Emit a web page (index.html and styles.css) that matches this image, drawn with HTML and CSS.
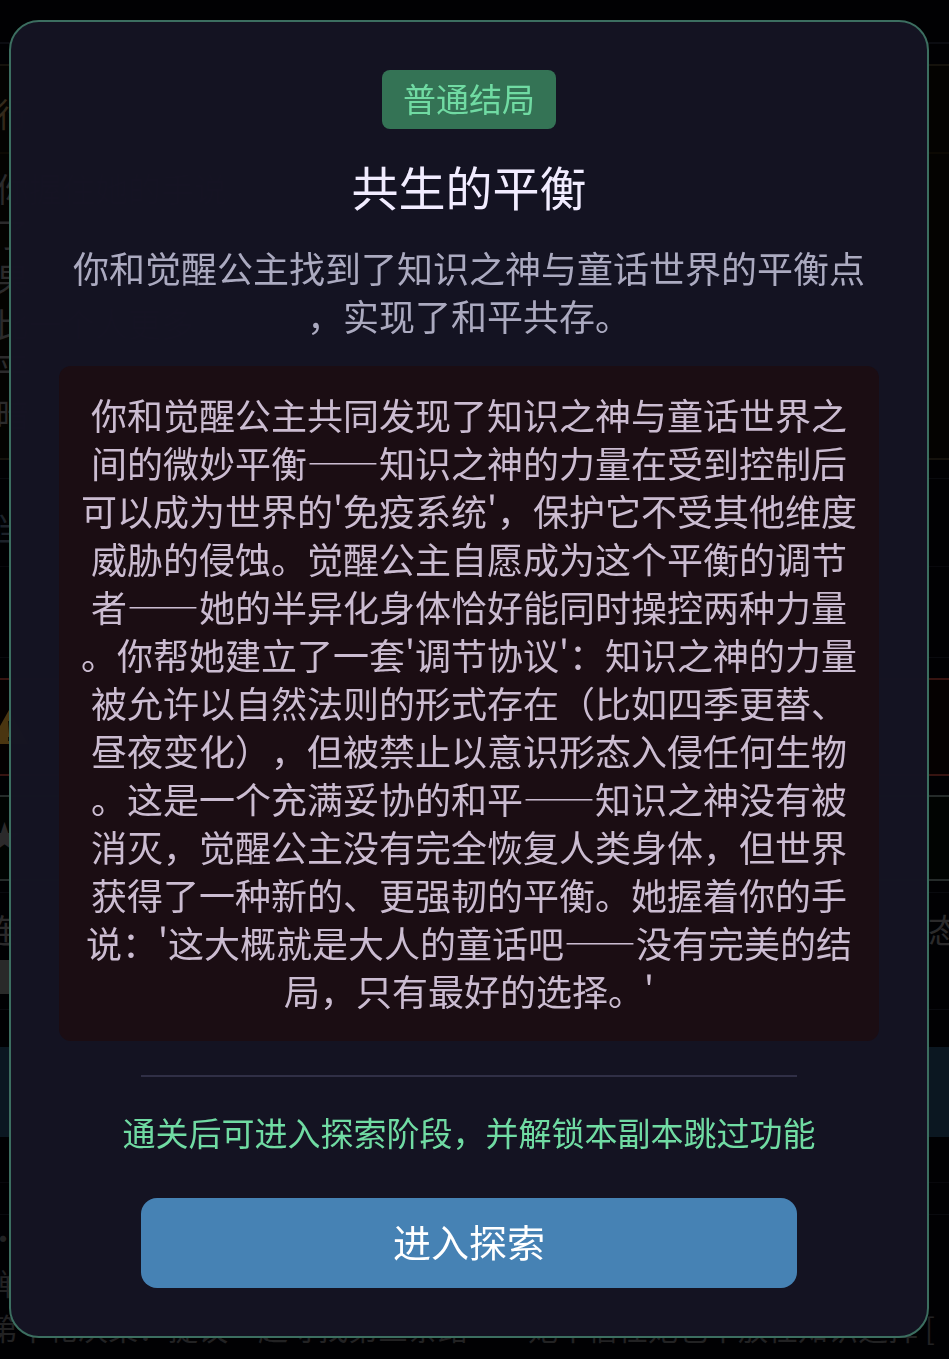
FILE: index.html
```
<!DOCTYPE html>
<html lang="zh-CN">
<head>
    <meta charset="UTF-8">
    <meta name="viewport" content="width=device-width, initial-scale=1.0">
    <title>共生的平衡</title>
    <link rel="stylesheet" href="styles.css">
</head>
<body>
    <!-- 游戏页面 -->
    <div class="scene" aria-hidden="true">
        <div class="scene-top"></div>
        <div class="story-panel">
            <div class="story-title">行</div>
            <div class="story-text">
                <p>你握住她的手说</p>
                <p>了</p>
                <p>果</p>
                <p>比一个人更多</p>
                <p>平</p>
                <p>暗</p>
            </div>
        </div>
        <div class="status-panel">
            <div class="status-title">当</div>
            <div class="status-body"></div>
        </div>
        <div class="box danger">
            <svg class="warn" viewBox="0 0 40 40">
                <path d="M17 1 L36 35 H-2 Z" fill="#4a3510"/>
                <path d="M16 12 H20 L19 25 H17 Z M16 28 H20 V32 H16 Z" fill="#120d04"/>
            </svg>
        </div>
        <div class="box reward">★</div>
        <div class="combo-panel">
            <div class="combo-row"><span>连</span><span>态</span></div>
            <div class="combo-bar"></div>
        </div>
        <div class="action-bar"></div>
        <div class="scene-gap"></div>
        <div class="log">
            <p>·</p>
            <p>弹</p>
            <p>第十轮决策：提议一起寻找第三条路——她不信任她也不放任知识选择 [</p>
            <p>普通]</p>
        </div>
    </div>

    <!-- 结局弹窗 -->
    <div class="overlay">
        <div class="modal" role="dialog" aria-modal="true" aria-labelledby="ending-title">
            <span class="badge">普通结局</span>
            <h1 class="title" id="ending-title">共生的平衡</h1>
            <p class="summary">你和觉醒公主找到了知识之神与童话世界的平衡点，实现了和平共存。</p>
            <div class="ending">你和觉醒公主共同发现了知识之神与童话世界之间的微妙平衡——知识之神的力量在受到控制后可以成为世界的'免疫系统'，保护它不受其他维度威胁的侵蚀。觉醒公主自愿成为这个平衡的调节者——她的半异化身体恰好能同时操控两种力量。你帮她建立了一套'调节协议'：知识之神的力量被允许以自然法则的形式存在（比如四季更替、昼夜变化），但被禁止以意识形态入侵任何生物。这是一个充满妥协的和平——知识之神没有被消灭，觉醒公主没有完全恢复人类身体，但世界获得了一种新的、更强韧的平衡。她握着你的手说：'这大概就是大人的童话吧——没有完美的结局，只有最好的选择。'</div>
            <hr class="divider">
            <p class="hint">通关后可进入探索阶段，并解锁本副本跳过功能</p>
            <button class="explore-btn" type="button">进入探索</button>
        </div>
    </div>
</body>
</html>
```
FILE: styles.css
```
* {
    margin: 0;
    padding: 0;
    box-sizing: border-box;
}

body {
    font-family: "Noto Sans CJK SC", sans-serif;
    font-weight: 400;
    background: #010103;
    height: 100vh;
    overflow: hidden;
    text-spacing-trim: space-all;
}

/* 背景页面 */
.scene {
    height: 100vh;
    overflow: hidden;
    font-size: 33px;
    line-height: 45px;
    color: #2b2a2b;
    white-space: nowrap;
}

.scene p,
.story-title,
.status-title {
    margin-left: -4px;
}

.scene-top {
    height: 44px;
    border-bottom: 2px solid #0b0c11;
}

.story-panel {
    margin-top: 20px;
    height: 396px;
    background: #040301;
    border-top: 2px solid #15120c;
    border-bottom: 2px solid #15120c;
}

.story-title {
    padding: 25px 0 16px;
    color: #33291b;
    border-bottom: 2px solid #0c0903;
}

.story-text {
    padding-top: 12px;
}

.status-panel {
    margin-top: 18px;
    height: 180px;
    border-top: 1px solid #090a0e;
    border-bottom: 1px solid #090a0e;
}

.status-title {
    padding: 26px 0 16px;
    color: #1c2129;
    border-bottom: 1px solid #08080c;
}

.box {
    border-top: 2px solid;
    border-bottom: 2px solid;
}

.danger {
    margin-top: 20px;
    height: 98px;
    padding-top: 29px;
    background: #050101;
    border-color: #371411;
}

.warn {
    display: block;
    width: 40px;
    height: 40px;
    margin-left: -8px;
}

.reward {
    margin-top: 19px;
    height: 86px;
    padding-top: 16px;
    text-indent: -12px;
    background: #010402;
    border-color: #252b2a;
}

.combo-panel {
    margin-top: 11px;
    height: 118px;
    padding-top: 14px;
    border-top: 1px solid #090a0e;
    border-bottom: 1px solid #090a0e;
}

.combo-row {
    display: flex;
    justify-content: space-between;
    margin-left: -16px;
    margin-right: -12px;
}

.combo-bar {
    width: 20px;
    height: 34px;
    margin-top: 8px;
    background: #292a29;
}

.action-bar {
    margin-top: 37px;
    height: 90px;
    background: #0b1721;
}

.scene-gap {
    height: 46px;
    border-bottom: 1px solid #08080c;
}

.log {
    margin-top: 31px;
    border-top: 1px solid #090a0e;
    color: #222223;
    font-size: 30px;
}

.log p {
    margin-left: -12px;
}

/* 弹窗 */
.overlay {
    position: fixed;
    inset: 0;
    padding: 20px 20px 20px 9px;
}

.modal {
    display: flex;
    flex-direction: column;
    align-items: center;
    padding: 48px;
    text-align: center;
    background: rgba(20, 19, 35, 0.98);
    border: 2px solid #3c6e60;
    border-radius: 30px;
}

.badge {
    padding: 5px 21px 7px;
    border-radius: 8px;
    background: #347355;
    color: #70dba3;
    font-size: 33px;
    line-height: 47px;
}

.title {
    margin: 24px 0 25px;
    color: #f1ecff;
    font-size: 47px;
    font-weight: 400;
    line-height: 65px;
}

.summary,
.ending {
    width: 100%;
    font-size: 36px;
    line-height: 48px;
    line-break: anywhere;
}

.summary {
    margin-bottom: 27px;
    color: #abaac0;
}

.ending {
    padding: 24px 20px 27px;
    border-radius: 12px;
    background: #1b0d13;
    color: #cbbcd1;
}

.divider {
    width: 80%;
    margin: 34px 0 31px;
    border: none;
    border-top: 2px solid #302f46;
}

.hint {
    color: #70dba3;
    font-size: 33px;
    line-height: 48px;
}

.explore-btn {
    width: 80%;
    margin-top: 42px;
    padding: 16px 16px 20px;
    border: none;
    border-radius: 16px;
    background: #4682b4;
    color: #ffffff;
    font-family: inherit;
    font-size: 38px;
    font-weight: inherit;
    line-height: 54px;
    cursor: pointer;
}
```
